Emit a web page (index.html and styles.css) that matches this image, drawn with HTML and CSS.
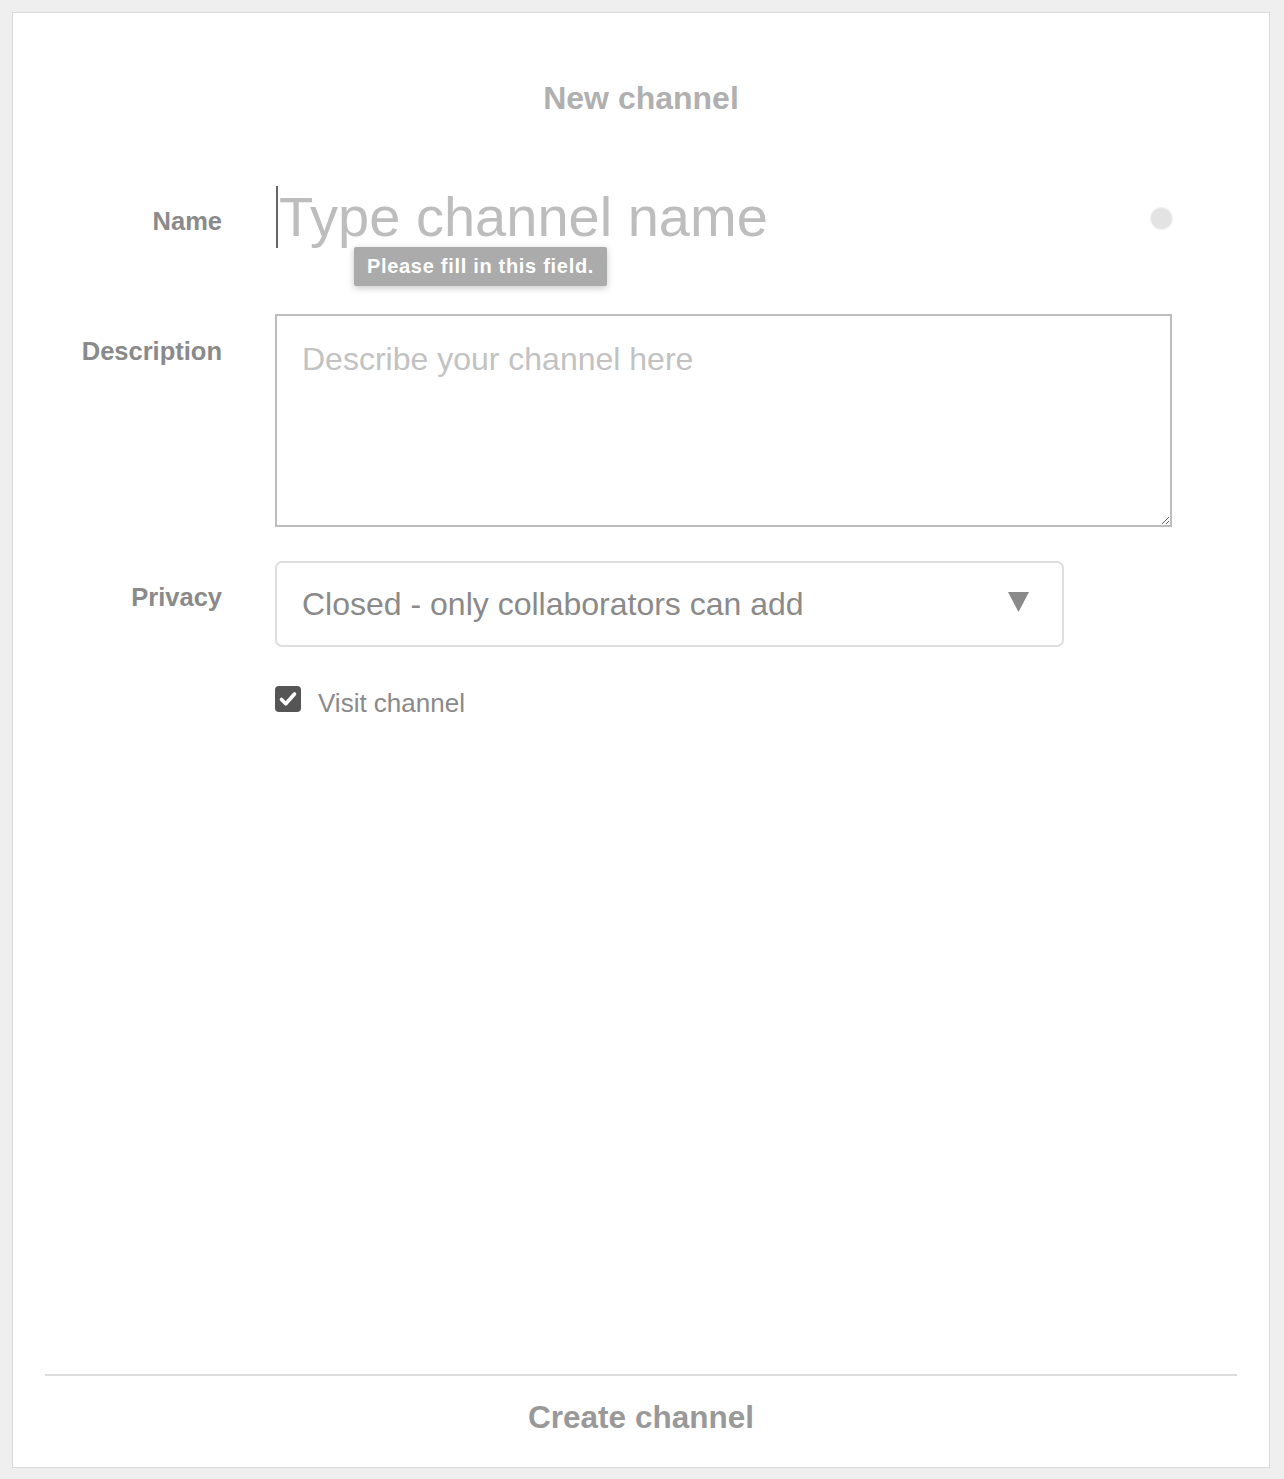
FILE: index.html
```html
<!DOCTYPE html>
<html lang="en">
<head>
<meta charset="utf-8">
<title>New channel</title>
<link rel="stylesheet" href="styles.css">
</head>
<body>
<div class="panel">
  <h1 class="title">New channel</h1>
  <form class="form">
    <div class="row row-name">
      <label class="label">Name</label>
      <div class="name-field">
        <div class="name-input"><span class="caret"></span><span class="name-ph">Type channel name</span></div>
        <span class="dot"></span>
        <div class="tooltip">Please fill in this field.</div>
      </div>
    </div>
    <div class="row row-desc">
      <label class="label">Description</label>
      <textarea class="desc" placeholder="Describe your channel here"></textarea>
    </div>
    <div class="row row-privacy">
      <label class="label">Privacy</label>
      <div class="select">
        <span class="select-text">Closed - only collaborators can add</span>
        <svg class="arrow" width="21" height="20" viewBox="0 0 21 20"><polygon points="0,0 21,0 10.5,20" fill="#8a8a8a"/></svg>
      </div>
    </div>
    <div class="row row-check">
      <span></span>
      <div class="check">
        <svg class="box" width="26" height="26" viewBox="0 0 26 26"><rect x="0" y="0" width="26" height="26" rx="4" fill="#555"/><path d="M6.5 13.5 L10.8 17.8 L19.5 8" fill="none" stroke="#fff" stroke-width="3.6" stroke-linecap="round" stroke-linejoin="round"/></svg>
        <span class="check-text">Visit channel</span>
      </div>
    </div>
  </form>
  <div class="footer">
    <div class="divider"></div>
    <div class="create">Create channel</div>
  </div>
</div>
</body>
</html>
```
FILE: styles.css
```css
* { box-sizing: border-box; }
html, body { margin: 0; }
body {
  background: #efefef;
  padding: 12px 14px 11px 12px;
  font-family: "Liberation Sans", Arial, sans-serif;
}
.panel {
  background: #fff;
  border: 1px solid #d9d9d9;
  height: 1456px;
  display: flex;
  flex-direction: column;
  padding-top: 67px;
}
.title {
  margin: 0;
  text-align: center;
  font-size: 32px;
  line-height: 36px;
  font-weight: bold;
  color: #b0b0b0;
}
.form {
  margin-top: 70px;
}
.row {
  display: grid;
  grid-template-columns: 209px 897px;
  column-gap: 53px;
  align-items: start;
}
.label {
  text-align: right;
  font-size: 25.5px;
  line-height: 30px;
  font-weight: bold;
  color: #8a8a8a;
}
.row-name .label { margin-top: 20px; }
.name-field {
  position: relative;
  height: 62px;
  display: flex;
  align-items: center;
  justify-content: space-between;
}
.name-input {
  display: flex;
  align-items: center;
  height: 62px;
}
.caret {
  width: 2px;
  height: 62px;
  background: #666;
  margin-left: 1px;
  margin-right: 1px;
}
.name-ph {
  font-size: 56px;
  line-height: 62px;
  color: #bdbdbd;
}
.dot {
  width: 21px;
  height: 21px;
  border-radius: 50%;
  background: #e3e3e3;
  box-shadow: 0 0 0 1px #f2f2f2;
  margin-top: 2px;
}
.tooltip {
  position: absolute;
  left: 79px;
  top: 61px;
  width: 253px;
  height: 39px;
  background: #ababab;
  border-radius: 2px;
  box-shadow: 0 2px 7px rgba(0,0,0,0.22);
  color: #fff;
  font-weight: bold;
  font-size: 20px;
  letter-spacing: 0.7px;
  line-height: 39px;
  text-align: center;
}
.row-desc { margin-top: 66px; }
.row-desc .label { margin-top: 22px; }
.desc {
  display: block;
  width: 897px;
  height: 213px;
  border: 2px solid #bdbdbd;
  border-radius: 0;
  padding: 25px 25px 23px;
  font-family: "Liberation Sans", Arial, sans-serif;
  font-size: 32px;
  line-height: 37px;
  color: #777;
  background: #fff;
  margin: 0;
  outline: none;
}
.desc::placeholder { color: #c2c2c2; }
.row-privacy { margin-top: 34px; }
.row-privacy .label { margin-top: 21px; }
.select {
  width: 789px;
  height: 86px;
  border: 2px solid #dedede;
  border-radius: 7px;
  display: flex;
  align-items: center;
  justify-content: space-between;
  padding: 0 33px 0 25px;
}
.select-text {
  font-size: 32px;
  line-height: 37px;
  color: #8a8a8a;
}
.arrow { display: block; margin-top: -4px; }
.row-check { margin-top: 39px; }
.check {
  display: flex;
  align-items: flex-start;
  gap: 17px;
}
.box { display: block; flex: none; }
.check-text {
  font-size: 26px;
  line-height: 30px;
  margin-top: 2px;
  color: #8a8a8a;
}
.footer {
  margin-top: auto;
  padding: 0 32px;
}
.divider {
  height: 2px;
  background: #dcdcdc;
}
.create {
  height: 91px;
  padding-top: 23px;
  text-align: center;
  font-size: 31.5px;
  line-height: 36px;
  font-weight: bold;
  color: #999;
}
```
